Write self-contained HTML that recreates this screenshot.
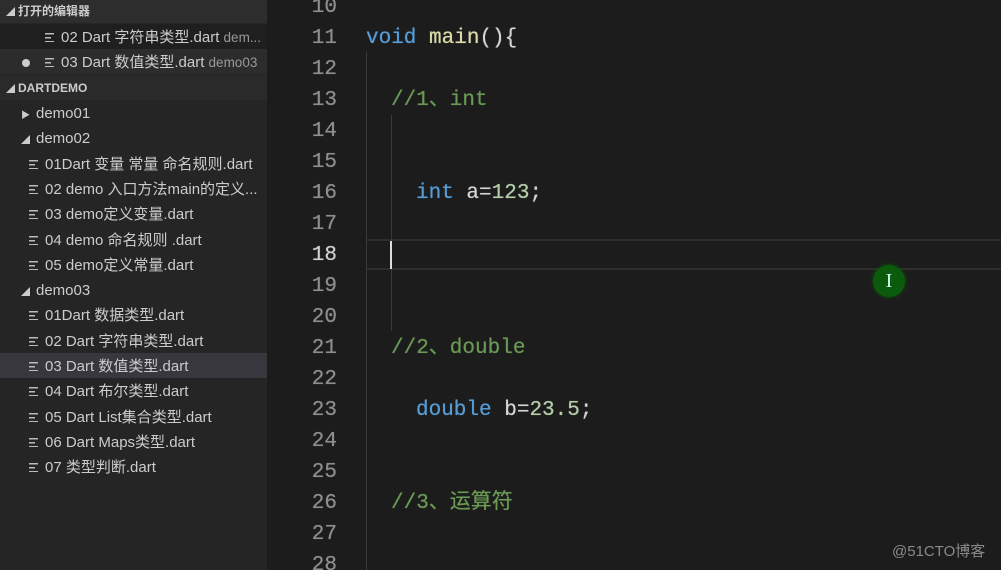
<!DOCTYPE html>
<html><head><meta charset="utf-8"><style>
*{margin:0;padding:0;box-sizing:border-box}
html,body{overflow:hidden}
body{width:1001px;height:570px;background:#1c1c1c;position:relative;font-family:"Liberation Sans","Noto Sans CJK SC",sans-serif}
#side{position:absolute;left:0;top:0;width:267px;height:570px;background:#252526;color:#cccccc;font-size:15px}
.r{position:absolute;left:0;width:267px;height:25px;line-height:27px;white-space:nowrap;overflow:hidden}
.h{font-weight:bold;font-size:12px}
.ic{display:inline-block;width:10px;height:9px;vertical-align:middle;margin-right:6px;margin-top:-2px;background:linear-gradient(#bbb,#bbb) 0 0/9px 1.5px no-repeat,linear-gradient(#bbb,#bbb) 0 4px/6px 1.5px no-repeat,linear-gradient(#bbb,#bbb) 0 8px/9px 1.5px no-repeat}
.tri{display:inline-block;font-size:9px;width:12px;color:#ccc}
.d{color:#999;font-size:13.5px}
#ed{position:absolute;left:267px;top:0;right:0;bottom:0;font-family:"Liberation Mono","Noto Sans CJK SC",monospace;font-size:21px;text-shadow:0 0 0.6px currentColor}
.ln{position:absolute;left:0;width:70px;text-align:right;color:#8e8e8e;height:31px;line-height:33px}
.c{position:absolute;left:99px;height:31px;line-height:33px;white-space:pre;color:#d4d4d4}
.k{color:#569cd6}.f{color:#dcdcaa}.cm{color:#6a9955}.n{color:#b5cea8}
</style></head><body>
<div id="side">
<div class="r h" style="top:0;height:23px;line-height:23px;background:#2d2d2e"><span class="tri" style="margin-left:6px">◢</span>打开的编辑器</div>
<div class="r" style="top:24px;background:#1f1f1f;padding-left:45px"><span class="ic"></span>02 Dart 字符串类型.dart <span class="d">dem...</span></div>
<div class="r" style="top:49px;background:#2c2c2d;padding-left:22px"><span style="display:inline-block;width:8px;height:8px;border-radius:50%;background:#ccc;margin-right:15px"></span><span class="ic"></span>03 Dart 数值类型.dart <span class="d">demo03</span></div>
<div class="r h" style="top:75px;background:#2a2a2b"><span class="tri" style="margin-left:6px">◢</span>DARTDEMO</div>
<div class="r" style="top:100px;padding-left:21px"><span class="tri" style="width:15px">▶</span>demo01</div>
<div class="r" style="top:125px;padding-left:21px"><span class="tri" style="width:15px">◢</span>demo02</div>
<div class="r" style="top:151px;padding-left:29px"><span class="ic"></span>01Dart 变量 常量 命名规则.dart</div>
<div class="r" style="top:176px;padding-left:29px"><span class="ic"></span>02 demo 入口方法main的定义...</div>
<div class="r" style="top:201px;padding-left:29px"><span class="ic"></span>03 demo定义变量.dart</div>
<div class="r" style="top:227px;padding-left:29px"><span class="ic"></span>04 demo 命名规则 .dart</div>
<div class="r" style="top:252px;padding-left:29px"><span class="ic"></span>05 demo定义常量.dart</div>
<div class="r" style="top:277px;padding-left:21px"><span class="tri" style="width:15px">◢</span>demo03</div>
<div class="r" style="top:302px;padding-left:29px"><span class="ic"></span>01Dart 数据类型.dart</div>
<div class="r" style="top:328px;padding-left:29px"><span class="ic"></span>02 Dart 字符串类型.dart</div>
<div class="r" style="top:353px;padding-left:29px;background:#37373d"><span class="ic"></span>03 Dart 数值类型.dart</div>
<div class="r" style="top:378px;padding-left:29px"><span class="ic"></span>04 Dart 布尔类型.dart</div>
<div class="r" style="top:404px;padding-left:29px"><span class="ic"></span>05 Dart List集合类型.dart</div>
<div class="r" style="top:429px;padding-left:29px"><span class="ic"></span>06 Dart Maps类型.dart</div>
<div class="r" style="top:454px;padding-left:29px"><span class="ic"></span>07 类型判断.dart</div>
</div>
<div id="ed">
<div style="position:absolute;left:99px;right:0;top:239px;height:31px;border-top:2px solid #2e2e2e;border-bottom:2px solid #2e2e2e"></div>
<div style="position:absolute;left:99px;top:52px;width:1px;height:518px;background:#3a3a3a"></div>
<div style="position:absolute;left:124px;top:115px;width:1px;height:216px;background:#3a3a3a"></div>
<div style="position:absolute;left:123px;top:241px;width:2px;height:28px;background:#ddd"></div>
<div class="ln" style="top:-9px">10</div>
<div class="ln" style="top:22px">11</div>
<div class="ln" style="top:53px">12</div>
<div class="ln" style="top:84px">13</div>
<div class="ln" style="top:115px">14</div>
<div class="ln" style="top:146px">15</div>
<div class="ln" style="top:177px">16</div>
<div class="ln" style="top:208px">17</div>
<div class="ln" style="top:239px;color:#d0d0d0">18</div>
<div class="ln" style="top:270px">19</div>
<div class="ln" style="top:301px">20</div>
<div class="ln" style="top:332px">21</div>
<div class="ln" style="top:363px">22</div>
<div class="ln" style="top:394px">23</div>
<div class="ln" style="top:425px">24</div>
<div class="ln" style="top:456px">25</div>
<div class="ln" style="top:487px">26</div>
<div class="ln" style="top:518px">27</div>
<div class="ln" style="top:549px">28</div>
<div class="c" style="top:22px"><span class="k">void</span> <span class="f">main</span>(){</div>
<div class="c" style="top:84px;left:124px"><span class="cm">//1、int</span></div>
<div class="c" style="top:177px;left:149px"><span class="k">int</span> a=<span class="n">123</span>;</div>
<div class="c" style="top:332px;left:124px"><span class="cm">//2、double</span></div>
<div class="c" style="top:394px;left:149px"><span class="k">double</span> b=<span class="n">23.5</span>;</div>
<div class="c" style="top:487px;left:124px"><span class="cm">//3、运算符</span></div>
<div style="position:absolute;left:606px;top:265px;width:32px;height:32px;border-radius:50%;background:#0c5a0c;box-shadow:0 0 4px #0c5a0c;color:#cfe;font-family:'Liberation Serif',serif;font-size:20px;text-align:center;line-height:32px;text-shadow:none">I</div>
<div style="position:absolute;left:625px;top:540px;color:#8a8a8a;font-family:'Liberation Sans','Noto Sans CJK SC',sans-serif;font-size:15px;text-shadow:none">@51CTO博客</div>
</div>
</body></html>
